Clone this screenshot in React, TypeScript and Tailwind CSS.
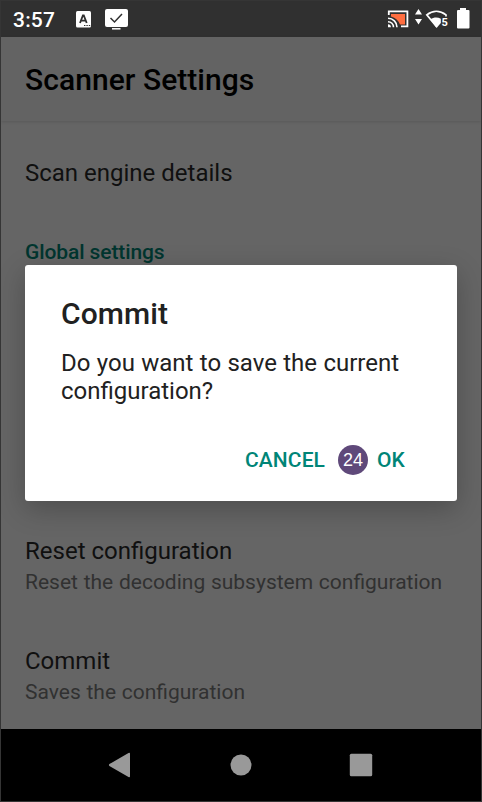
type SettingRowProps = { title: string; summary?: string; className: string };

function SettingRow({ title, summary, className }: SettingRowProps) {
  return (
    <div className={`flex flex-col px-6 ${className}`}>
      <div className="text-[24px] leading-8 text-[#101010]">{title}</div>
      {summary && <div className="pt-px text-[21px] leading-[29px] text-[#313131] [word-spacing:0.5px]">{summary}</div>}
    </div>
  );
}

function StatusBar() {
  return (
    <div className="flex h-9 shrink-0 items-center bg-[#303030]">
      <span className="ml-3 w-[62px] whitespace-nowrap pt-0.5 text-[21px] font-medium leading-8 tracking-[0.2px] text-white">3:57</span>
      <svg className="h-9 w-14" viewBox="74 1 56 36" fill="none">
        <rect x="75" y="11" width="15" height="16.500" rx="1.500" fill="#fff" />
        <path d="M79 23 81.900 15.500h.9l2.900 7.500M80.200 20.700h4.500" stroke="#303030" strokeWidth="1.800" />
        <path d="M83 25.500h1.400m1 0h1.400m1 0h1.400" stroke="#303030" strokeWidth="1.200" />
        <rect x="104" y="9" width="23" height="18" rx="2" fill="#fff" />
        <path d="m109.500 18 4 4 7.500-8" stroke="#303030" strokeWidth="1.500" />
        <path d="M111 28.800h8.500" stroke="#fff" strokeWidth="1.500" />
      </svg>
      <svg className="ml-auto h-9 w-[96px]" viewBox="385 1 96 36" fill="none">
        <path d="M391 14h14v10.500h-5c-1.500-4-4.500-6.800-9-8z" fill="#ff6e40" />
        <path d="M388.800 15v-3.600h18.600v15h-6.400" stroke="#fff" strokeWidth="1.800" />
        <path d="M388 18.200c5 0 9 4 9 9M388 21.700c3.100 0 5.500 2.400 5.500 5.500" stroke="#fff" strokeWidth="1.600" />
        <path d="M388 24.300c1.800 0 2.900 1.100 2.900 2.900H388z" fill="#fff" />
        <path d="m418.500 9 3.500 5.500h-7zM418.500 24.500l3.500-5.500h-7z" fill="#fff" />
        <path d="M446 16.500v-1.700c-6-4.700-13.300-4.700-19.200 0l9.800 12" stroke="#fff" strokeWidth="1.700" />
        <path d="M430.500 19.300c3.200-2.300 7-2.500 10.300-.6v4.300l-4.200 5z" fill="#fff" />
        <text x="441.500" y="26" fill="#fff" fontSize="11" fontWeight="700" fontFamily="Roboto">5</text>
        <path d="M460 8h6v2h2.500q1 0 1 1v16.500q0 1-1 1h-10.500q-1 0-1-1V11q0-1 1-1h2z" fill="#fff" />
      </svg>
    </div>
  );
}

function NavigationBar() {
  return (
    <div className="flex h-[72px] shrink-0 bg-black">
      <svg className="h-[72px] w-full" viewBox="1 729 480 72" fill="#999">
        <path d="M109.4 764.1 128.5 753q1.5-.7 1.5.7v22.6q0 1.4-1.5.7L109.4 765.900q-1-.9 0-1.800z" />
        <circle cx="241" cy="765" r="10.5" />
        <rect x="349.800" y="753.800" width="22.400" height="22.400" rx="1.500" />
      </svg>
    </div>
  );
}

function CommitDialog() {
  return (
    <div className="absolute left-6 top-[264px] flex h-[236px] w-[432px] flex-col rounded-[3px] bg-white px-9 pt-[29px] shadow-[0_8px_28px_rgba(0,0,0,0.24)]" role="dialog">
      <h2 className="text-[30px] font-medium leading-10 tracking-[0.1px] text-[#212121]">Commit</h2>
      <p className="mt-[15px] whitespace-nowrap text-[24px] leading-7 text-[#212121] [word-spacing:0.4px]">
        Do you want to save the current<br />configuration?
      </p>
      <div className="mt-[39px] flex h-[31px] items-center whitespace-nowrap pl-[184px] text-[21px] font-medium text-[#008577]">
        <button className="w-[92px] pt-0.5 text-left tracking-[0.1px]">CANCEL</button>
        <span className="ml-px flex size-[30px] items-center justify-center rounded-full bg-[#5f497a] pt-px font-['Liberation_Sans',Arial,sans-serif] text-[18px] font-normal text-white">24</span>
        <button className="ml-[9px] pt-0.5">OK</button>
      </div>
    </div>
  );
}

export default function App() {
  return (
    <div className="h-[802px] w-[482px] border border-[#353535] font-[Roboto,sans-serif]">
      <div className="relative flex h-[800px] w-[480px] flex-col overflow-hidden bg-[#656565]">
        <StatusBar />
        <header className="z-0 flex h-[84px] shrink-0 items-center bg-[#636363] px-6 pt-0.5 shadow-[0_1px_3px_rgba(0,0,0,0.12)]">
          <h1 className="text-[30px] font-medium leading-10 tracking-[0.05px] text-black">Scanner Settings</h1>
        </header>
        <main className="flex flex-1 flex-col">
          <SettingRow title="Scan engine details" className="pt-9" />
          <div className="mt-[47px] px-6 text-[21px] font-medium leading-8 tracking-[-0.1px] text-[#00352f]">Global settings</div>
          <SettingRow title="Reset configuration" summary="Reset the decoding subsystem configuration" className="mt-[267px]" />
          <SettingRow title="Commit" summary="Saves the configuration" className="mt-12" />
        </main>
        <NavigationBar />
        <CommitDialog />
      </div>
    </div>
  );
}
